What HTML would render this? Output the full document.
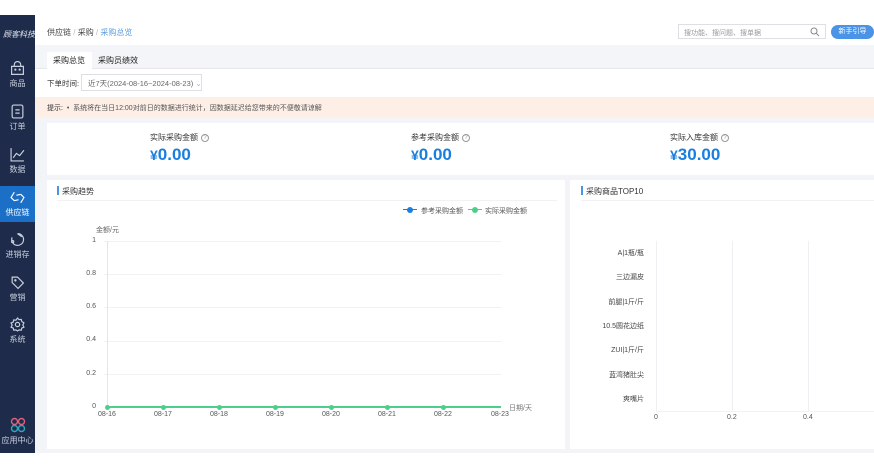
<!DOCTYPE html><html><head><meta charset="utf-8"><style>
*{margin:0;padding:0;box-sizing:border-box}
body{width:874px;height:474px;overflow:hidden;background:#fff;font-family:"Liberation Sans","Noto Sans CJK SC",sans-serif;font-size:8px;color:#333;position:relative}
.a{position:absolute;white-space:nowrap}
.side{left:0;top:15px;width:35px;height:438px;background:#1e2b4b}
.si{position:absolute;left:0;width:35px;text-align:center;color:#c9d0dc;font-size:8px}
.si svg{display:block;margin:0 auto 2px}
.main{left:35px;top:15px;width:839px;height:438px;background:#f2f4f7}
.tt{font-size:8px;color:#333}
.num{color:#1a7ee0;font-weight:bold;font-size:17px}
.q{display:inline-block;width:8px;height:8px;border:1px solid #999;border-radius:50%;font-size:6px;line-height:6px;text-align:center;color:#999;margin-left:3px;vertical-align:middle}
.grid{height:1px;background:#f1f2f4}
.yl{font-size:7px;color:#555;text-align:right;width:20px}
.xl{font-size:7px;color:#555}
.dot{width:5px;height:5px;border-radius:50%;background:#4ccf8a}
.rl{position:absolute;left:574px;width:70px;text-align:right;font-size:7px;color:#444}
</style></head><body>
<div class="a side"></div>
<div class="a" style="left:3px;top:29px;color:#e4e8f0;font-size:8px;font-style:italic">顾客科技</div>
<div class="si" style="top:61px"><svg width="15" height="15" viewBox="0 0 14 14" fill="none" stroke="#c9d0dc" stroke-width="1.1"><path d="M4 5V3.5a3 3 0 016 0V5M1.5 5h11v7.5h-11z"/><circle cx="5" cy="8" r=".5"/><circle cx="9" cy="8" r=".5"/></svg>商品</div>
<div class="si" style="top:104px"><svg width="15" height="15" viewBox="0 0 14 14" fill="none" stroke="#c9d0dc" stroke-width="1.1"><rect x="2" y="1" width="10" height="12" rx="1.5"/><path d="M5 5.5h4M5 8.5h4"/></svg>订单</div>
<div class="si" style="top:147px"><svg width="15" height="15" viewBox="0 0 14 14" fill="none" stroke="#c9d0dc" stroke-width="1.1"><path d="M1 1v12h12M3 10l3-4 3 2 4-5"/></svg>数据</div>
<div class="a" style="left:0;top:186px;width:35px;height:36px;background:#1b6fc7"></div>
<div class="a" style="left:32px;top:201px;width:0;height:0;border:3px solid transparent;border-right-color:#fff"></div>
<div class="si" style="top:190px;color:#fff"><svg width="15" height="15" viewBox="0 0 14 14" fill="none" stroke="#fff" stroke-width="1.1"><path d="M4 2L1 7l3 3M10 4l3 3-3 5M6 5l4-1M4 10l4-1"/></svg>供应链</div>
<div class="si" style="top:232px"><svg width="15" height="15" viewBox="0 0 14 14" fill="none" stroke="#c9d0dc" stroke-width="1.1"><path d="M7 1.5a5.5 5.5 0 11-5 3.5M7 1.5l4 3"/><circle cx="2.5" cy="9" r="1"/></svg>进销存</div>
<div class="si" style="top:275px"><svg width="15" height="15" viewBox="0 0 14 14" fill="none" stroke="#c9d0dc" stroke-width="1.1"><path d="M2 2h5l5.5 5.5-5 5L2 7z"/><circle cx="5" cy="5" r=".6"/></svg>营销</div>
<div class="si" style="top:317px"><svg width="15" height="15" viewBox="0 0 14 14" fill="none" stroke="#c9d0dc" stroke-width="1.1"><circle cx="7" cy="7" r="2"/><path d="M7 1l1.5 1.5 2-.3.5 2L13 5.5 12 7.5l1 2-2 .8-.5 2-2-.3L7 13l-1.5-1-2 .3-.5-2L1 9.5l1-2-1-2 2-.8.5-2 2 .3z"/></svg>系统</div>
<div class="si" style="top:417px"><svg width="16" height="16" viewBox="0 0 16 16" fill="none" stroke-width="1.4"><circle cx="4.5" cy="4.5" r="3" stroke="#e0607a"/><circle cx="11.5" cy="4.5" r="3" stroke="#e0607a"/><circle cx="4.5" cy="11.5" r="3" stroke="#2aa8c0"/><circle cx="11.5" cy="11.5" r="3" stroke="#2aa8c0"/></svg>应用中心</div>

<div class="a main"></div>
<div class="a" style="left:35px;top:15px;width:839px;height:30px;background:#fff"></div>
<div class="a" style="left:47px;top:27px;color:#444">供应链 <span style="color:#bbb">/</span> 采购 <span style="color:#bbb">/</span> <span style="color:#5a9be0">采购总览</span></div>
<div class="a" style="left:678px;top:24px;width:148px;height:15px;border:1px solid #dcdfe6;background:#fff;font-size:7px;color:#999;padding:3px 5px">搜功能、搜问题、搜单据<svg style="position:absolute;right:5px;top:2px" width="10" height="10" viewBox="0 0 10 10" fill="none" stroke="#888" stroke-width="1"><circle cx="4" cy="4" r="3"/><path d="M6.3 6.3L9 9"/></svg></div>
<div class="a" style="left:831px;top:25px;width:43px;height:14px;border-radius:7px;background:#4a93e6;color:#fff;font-size:7px;text-align:center;line-height:14px">新手引导</div>
<div class="a" style="left:35px;top:45px;width:839px;height:24px;background:#f3f5f8;border-bottom:1px solid #e6e8ec"></div>
<div class="a" style="left:47px;top:52px;width:45px;height:17px;background:#fff"></div>
<div class="a" style="left:53px;top:55px;color:#222">采购总览</div>
<div class="a" style="left:98px;top:55px;color:#222">采购员绩效</div>
<div class="a" style="left:35px;top:69px;width:839px;height:28px;background:#fff"></div>
<div class="a" style="left:47px;top:78px;color:#333;font-size:7.5px">下单时间:</div>
<div class="a" style="left:81px;top:74px;width:121px;height:17px;border:1px solid #dcdfe6;color:#666;font-size:7.5px;padding:3px 6px">近7天(2024-08-16~2024-08-23) <span style="color:#aaa">⌄</span></div>
<div class="a" style="left:35px;top:97px;width:839px;height:20px;background:#fdeee6"></div>
<div class="a" style="left:47px;top:103px;font-size:7px;color:#555"><b style="font-weight:normal;color:#333">提示:</b> &nbsp;• &nbsp;系统将在当日12:00对前日的数据进行统计，因数据延迟给您带来的不便敬请谅解</div>
<div class="a" style="left:47px;top:123px;width:827px;height:52px;background:#fff"></div>
<div class="a tt" style="left:150px;top:132px">实际采购金额<span class="q">?</span></div>
<div class="a num" style="left:150px;top:145px"><span style="font-size:14px">¥</span>0.00</div>
<div class="a tt" style="left:411px;top:132px">参考采购金额<span class="q">?</span></div>
<div class="a num" style="left:411px;top:145px"><span style="font-size:14px">¥</span>0.00</div>
<div class="a tt" style="left:670px;top:132px">实际入库金额<span class="q">?</span></div>
<div class="a num" style="left:670px;top:145px"><span style="font-size:14px">¥</span>30.00</div>

<div class="a" style="left:47px;top:180px;width:518px;height:269px;background:#fff"></div>
<div class="a" style="left:57px;top:186px;width:2px;height:9px;background:#4a93e6"></div>
<div class="a" style="left:62px;top:186px;color:#333">采购趋势</div>
<div class="a grid" style="left:57px;top:200px;width:500px"></div>
<div class="a" style="left:403px;top:209px;width:14px;height:1px;background:#1a7ee0"></div><div class="a" style="left:407px;top:207px;width:6px;height:6px;border-radius:50%;background:#1a7ee0"></div>
<div class="a" style="left:421px;top:206px;font-size:7px;color:#555">参考采购金额</div>
<div class="a" style="left:468px;top:209px;width:14px;height:1px;background:#4ccf8a"></div><div class="a" style="left:472px;top:207px;width:6px;height:6px;border-radius:50%;background:#4ccf8a"></div>
<div class="a" style="left:485px;top:206px;font-size:7px;color:#555">实际采购金额</div>
<div class="a" style="left:96px;top:225px;font-size:7px;color:#666">金额/元</div>
<div class="a yl" style="left:76px;top:237px">1</div>
<div class="a yl" style="left:76px;top:270px">0.8</div>
<div class="a yl" style="left:76px;top:303px">0.6</div>
<div class="a yl" style="left:76px;top:336px">0.4</div>
<div class="a yl" style="left:76px;top:370px">0.2</div>
<div class="a yl" style="left:76px;top:403px">0</div>
<div class="a grid" style="left:104px;top:241px;width:397px"></div>
<div class="a grid" style="left:104px;top:274px;width:397px"></div>
<div class="a grid" style="left:104px;top:307px;width:397px"></div>
<div class="a grid" style="left:104px;top:341px;width:397px"></div>
<div class="a grid" style="left:104px;top:374px;width:397px"></div>
<div class="a" style="left:107px;top:241px;width:1px;height:166px;background:#e3e5e8"></div>
<div class="a" style="left:107px;top:406px;width:394px;height:2px;background:#4ccf8a"></div>
<div class="a dot" style="left:105px;top:405px"></div><div class="a dot" style="left:161px;top:405px"></div><div class="a dot" style="left:217px;top:405px"></div><div class="a dot" style="left:273px;top:405px"></div><div class="a dot" style="left:329px;top:405px"></div><div class="a dot" style="left:385px;top:405px"></div><div class="a dot" style="left:441px;top:405px"></div>
<div class="a xl" style="left:98px;top:411px">08-16</div><div class="a xl" style="left:154px;top:411px">08-17</div><div class="a xl" style="left:210px;top:411px">08-18</div><div class="a xl" style="left:266px;top:411px">08-19</div><div class="a xl" style="left:322px;top:411px">08-20</div><div class="a xl" style="left:378px;top:411px">08-21</div><div class="a xl" style="left:434px;top:411px">08-22</div><div class="a xl" style="left:491px;top:411px">08-23</div>
<div class="a xl" style="left:509px;top:403px;color:#777">日期/天</div>

<div class="a" style="left:570px;top:180px;width:304px;height:269px;background:#fff"></div>
<div class="a" style="left:581px;top:186px;width:2px;height:9px;background:#4a93e6"></div>
<div class="a" style="left:586px;top:186px;color:#333">采购商品TOP10</div>
<div class="a grid" style="left:581px;top:200px;width:293px"></div>
<div class="a" style="left:656px;top:241px;width:1px;height:171px;background:#eef0f3"></div>
<div class="a" style="left:732px;top:241px;width:1px;height:171px;background:#eef0f3"></div>
<div class="a" style="left:808px;top:241px;width:1px;height:171px;background:#eef0f3"></div>
<div class="a grid" style="left:656px;top:411px;width:218px"></div>
<div class="rl" style="top:248px">A|1瓶/瓶</div>
<div class="rl" style="top:272px">三边漏皮</div>
<div class="rl" style="top:297px">前腿|1斤/斤</div>
<div class="rl" style="top:321px">10.5圆花边纸</div>
<div class="rl" style="top:345px">ZUI|1斤/斤</div>
<div class="rl" style="top:370px">蓝湾猪肚尖</div>
<div class="rl" style="top:394px">爽嘴片</div>
<div class="a xl" style="left:654px;top:414px">0</div><div class="a xl" style="left:727px;top:414px">0.2</div><div class="a xl" style="left:803px;top:414px">0.4</div>
</body></html>
